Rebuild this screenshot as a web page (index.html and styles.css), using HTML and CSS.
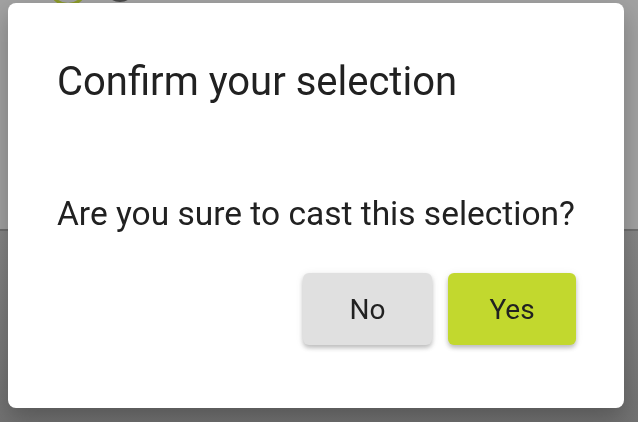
FILE: index.html
```html
<!DOCTYPE html>
<html lang="en">
<head>
  <meta charset="UTF-8">
  <meta name="viewport" content="width=device-width, initial-scale=1.0">
  <title>Confirm your selection</title>
  <link rel="stylesheet" href="styles.css">
</head>
<body>
  <div class="page">
    <div class="page-top">
      <span class="ring ring-green"></span>
      <span class="ring ring-dark"></span>
    </div>
    <div class="page-bottom"></div>
  </div>

  <div class="overlay">
    <div class="dialog">
      <h2 class="dialog-title">Confirm your selection</h2>
      <p class="dialog-text">Are you sure to cast this selection?</p>
      <div class="dialog-actions">
        <button class="btn btn-no">No</button>
        <button class="btn btn-yes">Yes</button>
      </div>
    </div>
  </div>
</body>
</html>
```

FILE: styles.css
```css
/* General */
html, body {
  margin: 0;
  padding: 0;
  height: 100%;
  overflow: hidden;
}

body {
  font-family: Roboto, "Noto Sans", sans-serif;
  color: #212121;
}

/* Page behind the dialog (dimmed) */
.page {
  height: 100%;
  display: flex;
  flex-direction: column;
}

.page-top {
  height: 229px;
  background: #a2a2a2;
  border-bottom: 2px solid #6f6f6f;
  position: relative;
}

.page-bottom {
  flex: 1;
  background: linear-gradient(#858585, #727272);
}

.ring {
  position: absolute;
  border-radius: 50%;
}

.ring-green {
  left: 48px;
  top: -34px;
  width: 34px;
  height: 34px;
  border: 3px solid #8c9b2c;
}

.ring-dark {
  left: 104px;
  top: -30px;
  width: 28px;
  height: 28px;
  border: 2px solid #4a4a4a;
}

/* Dialog */
.overlay {
  position: fixed;
  inset: 0;
  padding: 3px 14px 14px 8px;
}

.dialog {
  width: 616px;
  height: 405px;
  box-sizing: border-box;
  background: #fff;
  border-radius: 8px;
  padding: 55px 48px 0 49px;
  box-shadow: 0 10px 24px rgba(0, 0, 0, 0.25);
}

.dialog-title {
  margin: 0;
  font-size: 40px;
  font-weight: 400;
  line-height: 48px;
}

.dialog-text {
  margin: 88px 0 0 0;
  font-size: 33.5px;
  line-height: 40px;
}

.dialog-actions {
  display: flex;
  justify-content: flex-end;
  gap: 16px;
  margin-top: 39px;
}

/* Buttons */
.btn {
  width: 129px;
  height: 72px;
  border: none;
  border-radius: 6px;
  font-family: Roboto, "Noto Sans", sans-serif;
  font-size: 28px;
  color: #212121;
  box-shadow: 0 3px 4px rgba(0, 0, 0, 0.22), 0 1px 8px rgba(0, 0, 0, 0.08);
  cursor: pointer;
}

.btn-no {
  background: #e0e0e0;
}

.btn-yes {
  width: 128px;
  background: #c2d82e;
}
```
